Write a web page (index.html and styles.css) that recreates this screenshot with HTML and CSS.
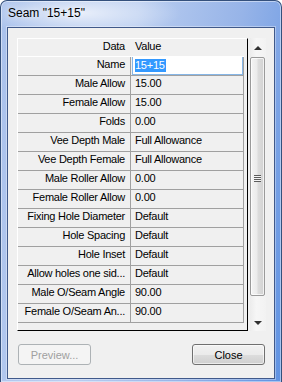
FILE: index.html
```html
<!DOCTYPE html>
<html lang="en">
  <head>
    <meta charset="utf-8">
    <title>Seam "15+15"</title>
    <link rel="stylesheet" href="styles.css">
  </head>
  <body>
    <div class="window">
      <div class="titlebar"><span class="title">Seam "15+15"</span></div>
      <div class="client">
        <div class="gridarea">
          <div class="grid">
            <div class="row head"><div class="name">Data</div><div class="value">Value</div></div>
            <div class="row"><div class="name">Name</div><div class="value"><span class="edit"><span class="sel">15+15</span></span></div></div>
            <div class="row"><div class="name">Male Allow</div><div class="value">15.00</div></div>
            <div class="row"><div class="name">Female Allow</div><div class="value">15.00</div></div>
            <div class="row"><div class="name">Folds</div><div class="value">0.00</div></div>
            <div class="row"><div class="name">Vee Depth Male</div><div class="value">Full Allowance</div></div>
            <div class="row"><div class="name">Vee Depth Female</div><div class="value">Full Allowance</div></div>
            <div class="row"><div class="name">Male Roller Allow</div><div class="value">0.00</div></div>
            <div class="row"><div class="name">Female Roller Allow</div><div class="value">0.00</div></div>
            <div class="row"><div class="name">Fixing Hole Diameter</div><div class="value">Default</div></div>
            <div class="row"><div class="name">Hole Spacing</div><div class="value">Default</div></div>
            <div class="row"><div class="name">Hole Inset</div><div class="value">Default</div></div>
            <div class="row"><div class="name">Allow holes one sid...</div><div class="value">Default</div></div>
            <div class="row"><div class="name">Male O/Seam Angle</div><div class="value">90.00</div></div>
            <div class="row"><div class="name">Female O/Seam An...</div><div class="value">90.00</div></div>
          </div>
          <div class="vscroll">
            <div class="arrow up"></div>
            <div class="track">
              <div class="thumb"><span class="grip"></span></div>
            </div>
            <div class="arrow down"></div>
          </div>
        </div>
        <div class="buttons">
          <button class="btn" disabled>Preview...</button>
          <button class="btn">Close</button>
        </div>
      </div>
    </div>
  </body>
</html>
```

FILE: styles.css
```css
html, body {
  margin: 0;
  padding: 0;
}
body {
  width: 282px;
  height: 382px;
  overflow: hidden;
  font-family: "Liberation Sans", Arial, sans-serif;
  font-size: 11px;
  color: #000;
}
.window {
  box-sizing: border-box;
  width: 282px;
  height: 382px;
  display: flex;
  flex-direction: column;
  border: 1px solid #34507c;
  border-bottom: none;
  border-radius: 7px 7px 0 0;
  background:
    radial-gradient(ellipse 100px 24px at 80px 12px, rgba(255, 255, 255, 0.7), rgba(255, 255, 255, 0) 100%),
    linear-gradient(100deg, #a9c1ec 0%, #b9cdf0 40%, #97b4e8 70%, #5f92e2 100%);
  box-shadow: inset 0 0 0 1px rgba(255, 255, 255, 0.45);
}
.titlebar {
  height: 26px;
  box-sizing: border-box;
  padding: 5px 0 0 7px;
  line-height: 15px;
  font-size: 12px;
}
.title {
  color: #000;
  text-shadow: 0 0 6px rgba(255, 255, 255, 0.9);
}
.client {
  flex: 1;
  margin: 0 6px 3px 6px;
  border: 1px solid #40598a;
  background: #f0f0f0;
  padding: 10px 8px 0 9px;
  box-shadow: 0 0 0 1px rgba(255, 255, 255, 0.35);
}
.gridarea {
  display: flex;
  gap: 2px;
  height: 293px;
}
.grid {
  box-sizing: border-box;
  width: 231px;
  height: 293px;
  border-left: 1px solid #fff;
  border-top: 1px solid #fff;
  border-right: 1px solid #000;
  border-bottom: 1px solid #000;
  background: #f0f0f0;
  letter-spacing: -0.25px;
}
.row {
  display: flex;
  width: 226px;
  height: 19px;
  box-sizing: border-box;
  border-bottom: 1px solid #a0a0a0;
  line-height: 15px;
  white-space: nowrap;
  &.head {
    height: 18px;
    border-bottom-color: #fff;
    & > div {
      border-right-color: transparent;
    }
  }
  & > div {
    box-sizing: border-box;
    width: 113px;
    border-right: 1px solid #a0a0a0;
    overflow: hidden;
  }
  & > .name {
    text-align: right;
    padding-right: 5px;
  }
  & > .value {
    position: relative;
    padding-left: 4px;
  }
}
.edit {
  position: absolute;
  left: 1px;
  top: -1px;
  right: 0;
  bottom: 0;
  background: #fff;
  border: 1px solid #86b6e6;
  padding-left: 2px;
  line-height: 16px;
}
.sel {
  background: #3399ff;
  color: #fff;
  padding: 0 1px 1px 0;
}
.vscroll {
  width: 16px;
  height: 293px;
  display: flex;
  flex-direction: column;
  background: linear-gradient(to right, #ececec, #f6f6f6 40%, #f2f2f2);
}
.arrow {
  height: 18px;
  display: flex;
  align-items: center;
  justify-content: center;
  &::before {
    content: "";
    border-left: 4px solid transparent;
    border-right: 4px solid transparent;
  }
  &.up::before {
    border-bottom: 4px solid #303030;
    margin-top: 1px;
  }
  &.down::before {
    border-top: 4px solid #303030;
    margin-top: 2px;
  }
}
.track {
  flex: 1;
  padding: 1px 0 17px 0;
}
.thumb {
  box-sizing: border-box;
  height: 239px;
  margin: 0 1px 0 0;
  border: 1px solid #9a9a9a;
  border-radius: 2px;
  background: linear-gradient(to right, #f4f4f4, #ebebeb 45%, #dcdcdc 55%, #d2d2d2);
  box-shadow: inset 0 0 0 1px rgba(255, 255, 255, 0.7);
  display: flex;
  align-items: center;
  justify-content: center;
}
.grip {
  width: 7px;
  height: 7px;
  margin-top: 4px;
  background: repeating-linear-gradient(to bottom, #5c5c5c 0 1px, #f4f4f4 1px 2px);
}
.buttons {
  display: flex;
  justify-content: space-between;
  padding: 0 1px;
  margin-top: 13px;
}
.btn {
  box-sizing: border-box;
  width: 73px;
  height: 21px;
  padding: 0;
  font-family: "Liberation Sans", Arial, sans-serif;
  font-size: 11px;
  color: #000;
  border: 1px solid #707070;
  border-radius: 3px;
  background: linear-gradient(to bottom, #f2f2f2 0%, #ebebeb 50%, #dddddd 51%, #cfcfcf 100%);
  box-shadow: inset 0 0 0 1px rgba(255, 255, 255, 0.6);
  &:disabled {
    color: #a0a0a0;
    border-color: #adb2b5;
    background: #f4f4f4;
    box-shadow: none;
  }
}
```
